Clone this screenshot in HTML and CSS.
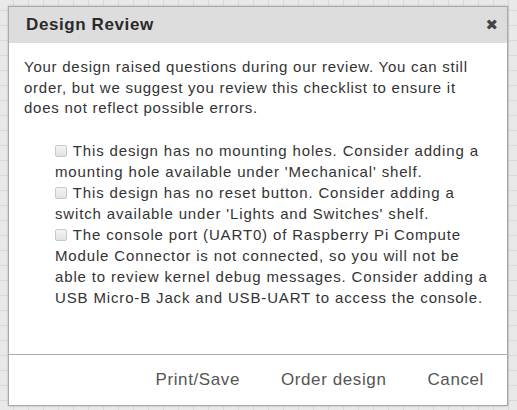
FILE: index.html
```html
<!DOCTYPE html>
<html>
<head>
<meta charset="utf-8">
<link rel="stylesheet" href="styles.css">
</head>
<body>
<div class="dialog">
  <div class="header">
    <span class="title">Design Review</span>
    <span class="close">&#x2716;</span>
  </div>
  <div class="body">
    <p class="intro">Your design raised questions during our review. You can still order, but we suggest you review this checklist to ensure it does not reflect possible errors.</p>
    <ul class="checklist">
      <li><input type="checkbox" class="cb"> This design has no mounting holes. Consider adding a mounting hole available under 'Mechanical' shelf.</li>
      <li><input type="checkbox" class="cb"> This design has no reset button. Consider adding a switch available under 'Lights and Switches' shelf.</li>
      <li><input type="checkbox" class="cb"> The console port (UART0) of Raspberry Pi Compute Module Connector is not connected, so you will not be able to review kernel debug messages. Consider adding a USB Micro-B Jack and USB-UART to access the console.</li>
    </ul>
  </div>
  <div class="footer">
    <span class="btn">Print/Save</span>
    <span class="btn">Order design</span>
    <span class="btn">Cancel</span>
  </div>
</div>
</body>
</html>
```
FILE: styles.css
```css
html, body {
  margin: 0;
  padding: 0;
}
body {
  width: 517px;
  height: 410px;
  background-color: #e9e9e9;
  background-image:
    linear-gradient(to right, #d9d9d9 1px, transparent 1px),
    linear-gradient(to bottom, #d9d9d9 1px, transparent 1px);
  background-size: 15px 15px;
  background-position: 13px 10px;
  font-family: "Liberation Sans", Arial, sans-serif;
  overflow: hidden;
  padding-top: 6px;
  padding-left: 8px;
  box-sizing: border-box;
}
.dialog {
  width: 500px;
  height: 400px;
  box-sizing: border-box;
  border: 1px solid #a9a9a9;
  background: #fff;
  box-shadow: 0 0 2px rgba(0,0,0,0.25);
  display: flex;
  flex-direction: column;
}
.header {
  height: 36px;
  background: #dddddd;
  display: flex;
  align-items: center;
  justify-content: space-between;
  padding: 0 9px 0 17px;
}
.title {
  font-size: 17px;
  font-weight: bold;
  color: #2a2a2a;
  letter-spacing: 0.6px;
}
.close {
  font-size: 15px;
  color: #444;
  font-family: "DejaVu Sans", sans-serif;
}
.body {
  flex: 1;
  padding: 0 15px;
  color: #333;
  font-size: 15px;
  letter-spacing: 0.75px;
}
.intro {
  margin: 14px 0 0;
  line-height: 20.5px;
}
.checklist {
  list-style: none;
  margin: 21px 0 0;
  padding: 0 0 0 31px;
  line-height: 21px;
  letter-spacing: 0.85px;
}
.cb {
  width: 12px;
  height: 12px;
  margin: 0 1px 0 0;
  vertical-align: -1px;
  appearance: none;
  border: 1px solid #c8c8c8;
  border-radius: 2px;
  background: linear-gradient(#f4f4f4, #e2e2e2);
  box-sizing: border-box;
}
.footer {
  height: 50px;
  border-top: 1px solid #aaa;
  display: flex;
  justify-content: flex-end;
  align-items: center;
  padding-right: 23px;
  gap: 41px;
}
.btn {
  font-size: 17px;
  color: #555;
  letter-spacing: 0.6px;
}
```
